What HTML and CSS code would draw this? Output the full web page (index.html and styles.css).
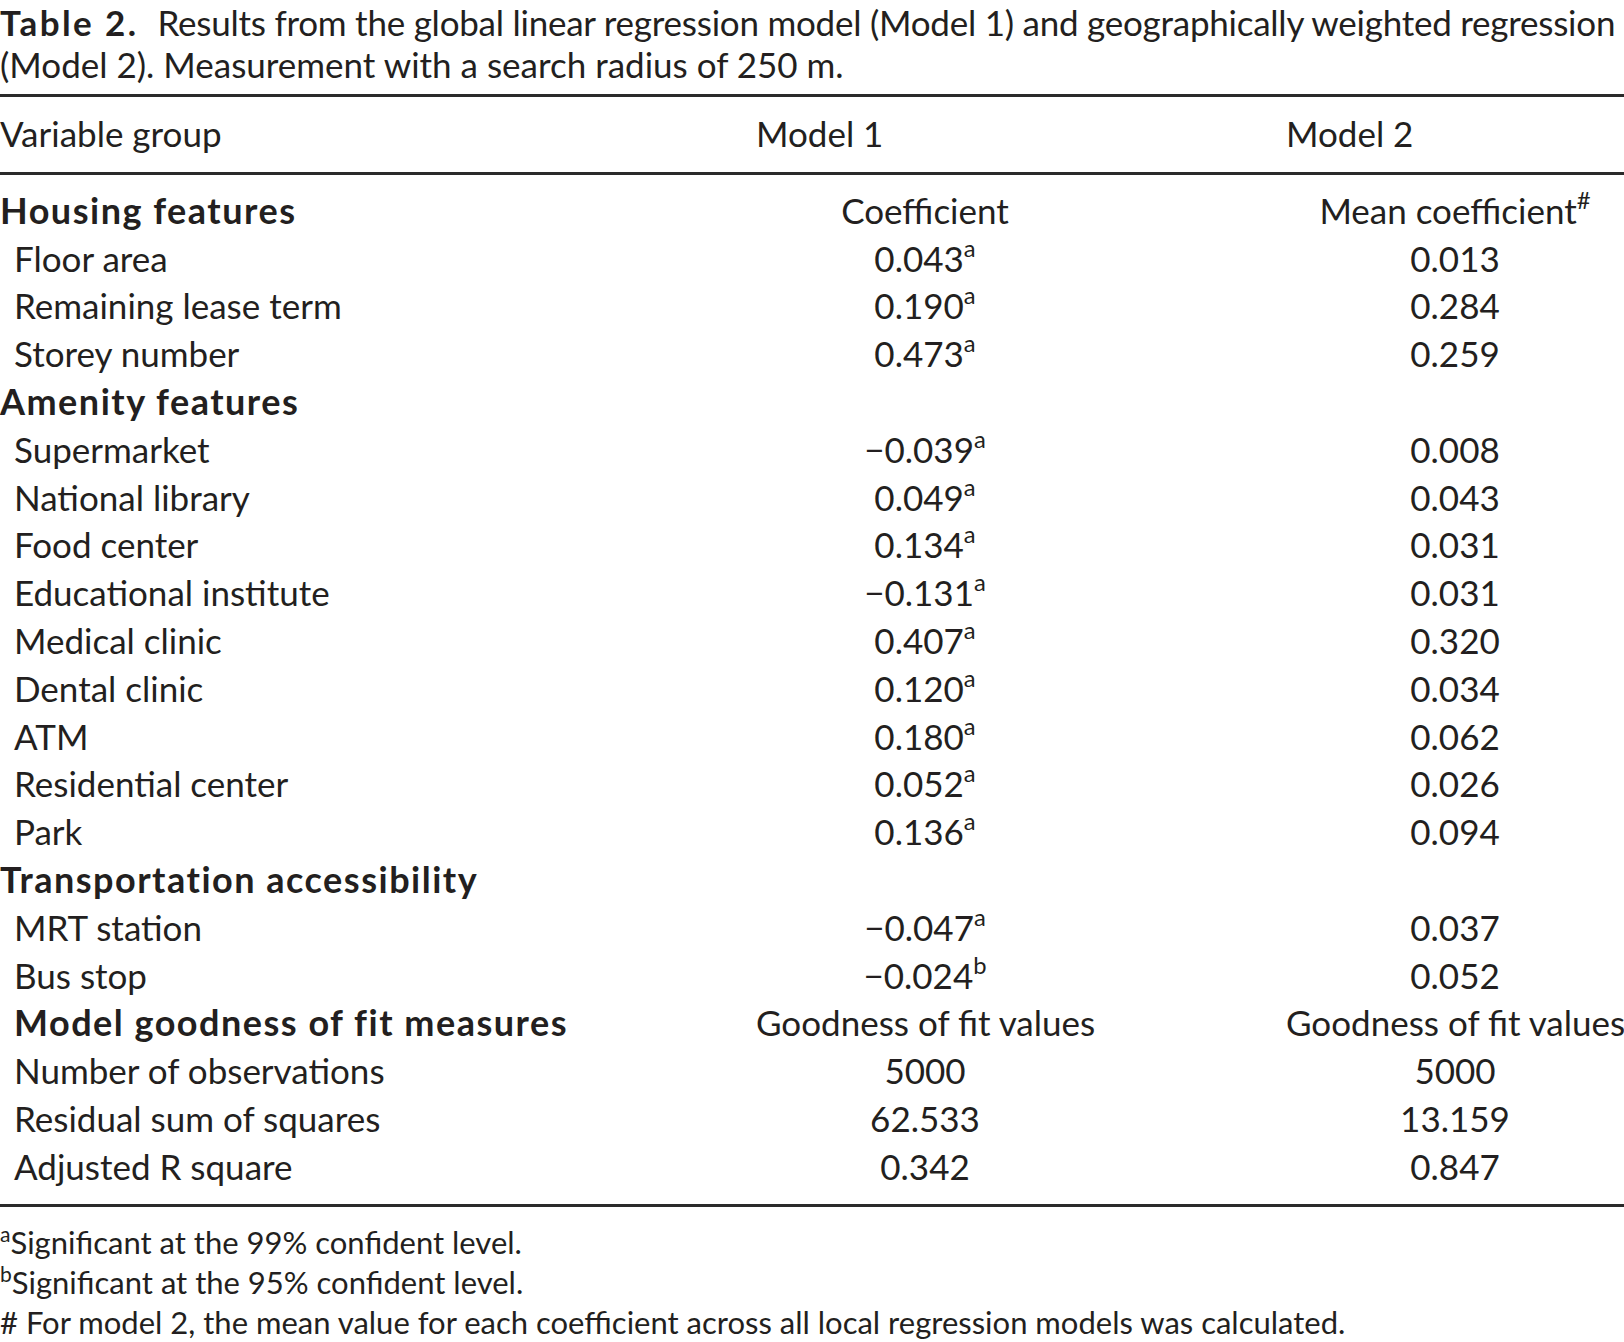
FILE: index.html
```html
<!DOCTYPE html>
<html lang="en">
<head>
<meta charset="utf-8">
<title>Table 2</title>
<link rel="stylesheet" href="styles.css">
</head>
<body>
<div class="page">
  <p class="caption"><span class="caption-label">Table 2.</span><span class="caption-first">Results from the global linear regression model (Model 1) and geographically weighted regression</span><br>(Model 2). Measurement with a search radius of 250 m.</p>
  <table class="results">
    <colgroup>
      <col class="c-var">
      <col class="c-m1">
      <col class="c-m2">
    </colgroup>
    <thead>
      <tr>
        <th class="h-var">Variable group</th>
        <th class="h-m1">Model 1</th>
        <th class="h-m2">Model 2</th>
      </tr>
    </thead>
    <tbody>
      <tr class="first">
        <td class="group">Housing features</td>
        <td class="m1">Coefficient</td>
        <td class="m2">Mean coefficient<sup class="sx">#</sup></td>
      </tr>
      <tr><td class="item">Floor area</td><td class="m1">0.043<sup class="sx">a</sup></td><td class="m2">0.013</td></tr>
      <tr><td class="item">Remaining lease term</td><td class="m1">0.190<sup class="sx">a</sup></td><td class="m2">0.284</td></tr>
      <tr><td class="item">Storey number</td><td class="m1">0.473<sup class="sx">a</sup></td><td class="m2">0.259</td></tr>
      <tr><td class="group">Amenity features</td><td class="m1"></td><td class="m2"></td></tr>
      <tr><td class="item">Supermarket</td><td class="m1">−0.039<sup class="sx">a</sup></td><td class="m2">0.008</td></tr>
      <tr><td class="item">National library</td><td class="m1">0.049<sup class="sx">a</sup></td><td class="m2">0.043</td></tr>
      <tr><td class="item">Food center</td><td class="m1">0.134<sup class="sx">a</sup></td><td class="m2">0.031</td></tr>
      <tr><td class="item">Educational institute</td><td class="m1">−0.131<sup class="sx">a</sup></td><td class="m2">0.031</td></tr>
      <tr><td class="item">Medical clinic</td><td class="m1">0.407<sup class="sx">a</sup></td><td class="m2">0.320</td></tr>
      <tr><td class="item">Dental clinic</td><td class="m1">0.120<sup class="sx">a</sup></td><td class="m2">0.034</td></tr>
      <tr><td class="item">ATM</td><td class="m1">0.180<sup class="sx">a</sup></td><td class="m2">0.062</td></tr>
      <tr><td class="item">Residential center</td><td class="m1">0.052<sup class="sx">a</sup></td><td class="m2">0.026</td></tr>
      <tr><td class="item">Park</td><td class="m1">0.136<sup class="sx">a</sup></td><td class="m2">0.094</td></tr>
      <tr><td class="group">Transportation accessibility</td><td class="m1"></td><td class="m2"></td></tr>
      <tr><td class="item">MRT station</td><td class="m1">−0.047<sup class="sx">a</sup></td><td class="m2">0.037</td></tr>
      <tr><td class="item">Bus stop</td><td class="m1">−0.024<sup class="sx">b</sup></td><td class="m2">0.052</td></tr>
      <tr><td class="item group">Model goodness of fit measures</td><td class="m1">Goodness of fit values</td><td class="m2">Goodness of fit values</td></tr>
      <tr><td class="item">Number of observations</td><td class="m1">5000</td><td class="m2">5000</td></tr>
      <tr><td class="item">Residual sum of squares</td><td class="m1">62.533</td><td class="m2">13.159</td></tr>
      <tr class="last"><td class="item">Adjusted R square</td><td class="m1">0.342</td><td class="m2">0.847</td></tr>
    </tbody>
  </table>
  <div class="notes">
    <p class="note"><sup class="nx">a</sup>Significant at the 99% confident level.</p>
    <p class="note"><sup class="nx">b</sup>Significant at the 95% confident level.</p>
    <p class="note"># For model 2, the mean value for each coefficient across all local regression models was calculated.</p>
  </div>
</div>
</body>
</html>
```
FILE: styles.css
```css
html, body {
  margin: 0;
  padding: 0;
  background: #ffffff;
}

body {
  font-family: "Lato", "Open Sans", sans-serif;
  color: #231f20;
  width: 1624px;
  overflow: hidden;
}

.page {
  width: 1624px;
}

.caption {
  margin: 0;
  padding-top: 1px;
  font-size: 35px;
  line-height: 42px;
  white-space: nowrap;
}

.caption-label {
  font-weight: 700;
  letter-spacing: 2.4px;
  margin-right: 19px;
}

.caption-first {
  letter-spacing: -0.24px;
}

.results {
  margin-top: 9px;
  width: 1624px;
  border-collapse: collapse;
  table-layout: fixed;
  font-size: 35px;
  line-height: 47.8px;
  border-top: 3px solid #2a2a2a;
  border-bottom: 3px solid #2a2a2a;
}

.c-var { width: 756px; }
.c-m1 { width: 530px; }
.c-m2 { width: 338px; }

.results th,
.results td {
  padding: 0;
  white-space: nowrap;
  vertical-align: top;
}

.results thead th {
  font-weight: 400;
  text-align: left;
  padding-top: 13px;
  padding-bottom: 14px;
  border-bottom: 3px solid #2a2a2a;
}

.results tbody tr.first td {
  padding-top: 12px;
}

.results tbody tr.last td {
  padding-bottom: 13px;
}

.results td.group {
  font-weight: 700;
  font-size: 36px;
  letter-spacing: 1.5px;
}

.results td.item {
  padding-left: 14px;
}

.results td.m1 {
  text-align: center;
  padding-right: 192px;
}

.results td.m2 {
  text-align: center;
}

.sx {
  font-size: 0.68em;
  line-height: 0;
  vertical-align: 0.62em;
}

.notes {
  margin-top: 15px;
}

.note {
  margin: 0;
  font-size: 31px;
  line-height: 40px;
  white-space: nowrap;
}

.nx {
  font-size: 0.68em;
  line-height: 0;
  vertical-align: 0.55em;
}
```
